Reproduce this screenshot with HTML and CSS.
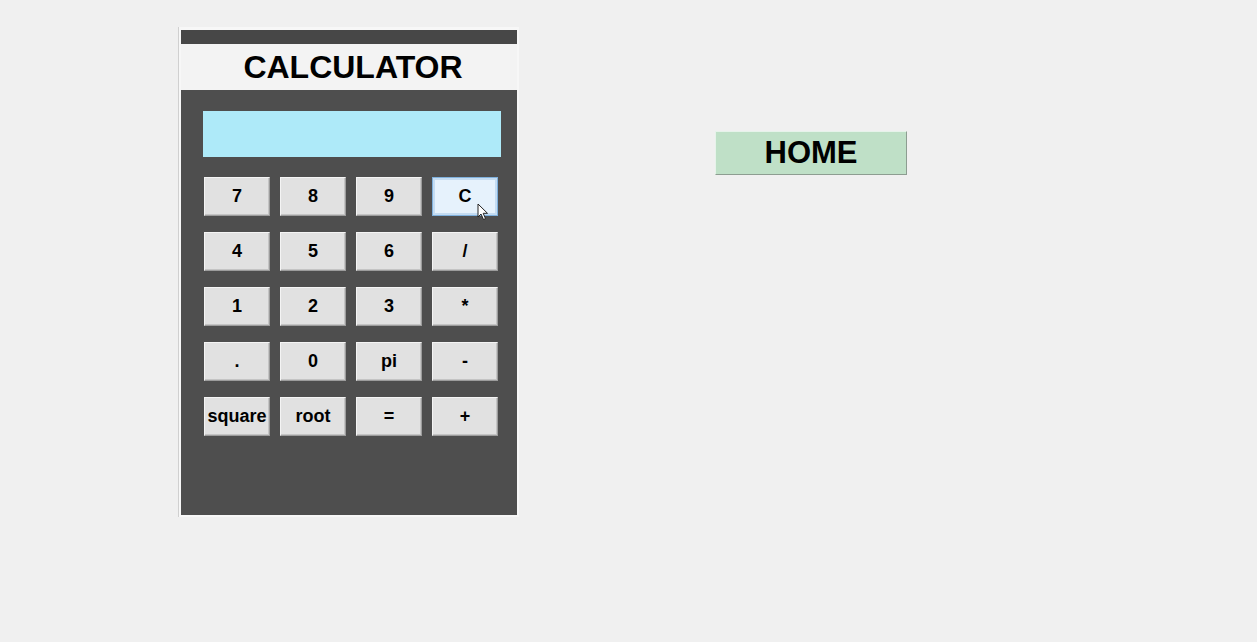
FILE: index.html
```html
<!DOCTYPE html>
<html lang="en">
<head>
<meta charset="utf-8">
<title>Calculator</title>
<link rel="stylesheet" href="styles.css">
</head>
<body>
<div class="page">
  <div class="panel">
    <div class="topbar"></div>
    <div class="title">CALCULATOR</div>
    <div class="body">
      <div class="display"></div>
      <div class="keys">
        <button class="key">7</button>
        <button class="key">8</button>
        <button class="key">9</button>
        <button class="key key-hover">C
          <svg class="cursor" width="12" height="18" viewBox="0 0 12 18"><path d="M1 1 L1 14 L4 11 L6.5 16.5 L8.5 15.6 L6.2 10.3 L10.5 10.3 Z" fill="#fff" stroke="#222" stroke-width="1" stroke-linejoin="round"/></svg>
        </button>
        <button class="key">4</button>
        <button class="key">5</button>
        <button class="key">6</button>
        <button class="key">/</button>
        <button class="key">1</button>
        <button class="key">2</button>
        <button class="key">3</button>
        <button class="key">*</button>
        <button class="key">.</button>
        <button class="key">0</button>
        <button class="key">pi</button>
        <button class="key">-</button>
        <button class="key">square</button>
        <button class="key">root</button>
        <button class="key">=</button>
        <button class="key">+</button>
      </div>
    </div>
  </div>
  <button class="home">HOME</button>
</div>
</body>
</html>
```
FILE: styles.css
```css
html, body {
  margin: 0;
  padding: 0;
  background: #f0f0f0;
  font-family: "Liberation Sans", Arial, sans-serif;
}
.page {
  display: flex;
  align-items: flex-start;
  padding-left: 178px;
  height: 642px;
  box-sizing: border-box;
}
.panel {
  margin-top: 27px;
  width: 341px;
  box-sizing: border-box;
  padding: 3px 2px 2px 2px;
  background: #f7f7f7;
  border-left: 1px solid #d0d0d0;
}
.topbar {
  height: 14px;
  background: #474747;
}
.title {
  height: 46px;
  background: #f3f3f3;
  display: flex;
  align-items: center;
  justify-content: center;
  padding-left: 8px;
  font-size: 32px;
  font-weight: bold;
  color: #000;
}
.body {
  height: 425px;
  box-sizing: border-box;
  background: #4e4e4e;
  padding: 21px 0 0 22px;
}
.display {
  width: 298px;
  height: 46px;
  background: #aeeaf9;
}
.keys {
  margin: 20px 0 0 1px;
  display: grid;
  grid-template-columns: repeat(4, 66px);
  grid-auto-rows: 39px;
  column-gap: 10px;
  row-gap: 16px;
}
.key {
  position: relative;
  margin: 0;
  padding: 0;
  background: #e1e1e1;
  border: 1px solid;
  border-color: #f4f4f4 #9c9c9c #9c9c9c #f4f4f4;
  box-shadow: inset -1px -1px 0 #c4c4c4;
  font-family: "Liberation Sans", Arial, sans-serif;
  font-size: 18px;
  font-weight: bold;
  color: #000;
  white-space: nowrap;
}
.key-hover {
  background: #e6f2fc;
  border-color: #7fb0dc;
  box-shadow: inset 0 0 0 2px #c4dcf2;
}
.cursor {
  position: absolute;
  left: 44px;
  top: 25px;
}
.home {
  margin: 131px 0 0 196px;
  width: 192px;
  height: 44px;
  padding: 0;
  background: #bfe0c7;
  border: 1px solid;
  border-color: #e6f3ea #8d9d91 #8d9d91 #e6f3ea;
  font-family: "Liberation Sans", Arial, sans-serif;
  font-size: 31px;
  font-weight: bold;
  color: #000;
}
```
